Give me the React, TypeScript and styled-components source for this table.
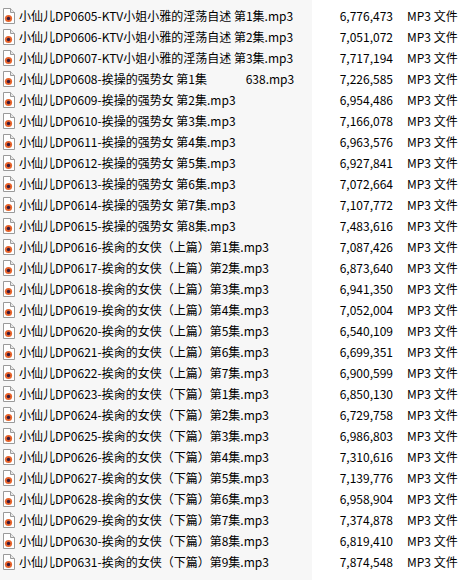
import React from 'react';
import styled, { createGlobalStyle } from 'styled-components';

const GlobalStyle = createGlobalStyle`
  html, body {
    margin: 0;
    padding: 0;
    background: #ffffff;
  }
`;

const List = styled.div`
  width: 471px;
  height: 580px;
  box-sizing: border-box;
  padding-top: 5px;
  overflow: hidden;
  background: linear-gradient(to right, #f7f7f7 312px, #ffffff 312px);
  font-family: "Microsoft YaHei UI", "Noto Sans CJK SC", "Noto Sans", sans-serif;
  font-size: 12px;
  color: #000000;
`;

const Row = styled.div`
  display: grid;
  grid-template-columns: 312px 81px 1fr;
  height: 21px;
  align-items: center;
  white-space: pre;
`;

const NameCell = styled.div`
  display: flex;
  align-items: center;
  gap: 2px;
  padding-left: 1px;
  overflow: hidden;
`;

const SizeCell = styled.div`
  text-align: right;
`;

const TypeCell = styled.div`
  padding-left: 14px;
`;

const Mp3Icon = () => (
  <svg width="16" height="16" viewBox="0 0 16 16">
    <path d="M2.5 0.5 H9.5 L13.5 4.5 V15.5 H2.5 Z" fill="#ffffff" stroke="#9a9a9a" />
    <path d="M9.5 0.5 V4.5 H13.5" fill="#e8e8e8" stroke="#9a9a9a" />
    <circle cx="7.5" cy="10.5" r="3.6" fill="#e8632a" />
    <circle cx="7.5" cy="10.5" r="1.7" fill="#3a1a3a" />
  </svg>
);

type FileItem = { name: string; size: string };

const files: FileItem[] = [
  { name: '小仙儿DP0605-KTV小姐小雅的淫荡自述 第1集.mp3', size: '6,776,473' },
  { name: '小仙儿DP0606-KTV小姐小雅的淫荡自述 第2集.mp3', size: '7,051,072' },
  { name: '小仙儿DP0607-KTV小姐小雅的淫荡自述 第3集.mp3', size: '7,717,194' },
  { name: '小仙儿DP0608-挨操的强势女 第1集　　　 638.mp3', size: '7,226,585' },
  { name: '小仙儿DP0609-挨操的强势女 第2集.mp3', size: '6,954,486' },
  { name: '小仙儿DP0610-挨操的强势女 第3集.mp3', size: '7,166,078' },
  { name: '小仙儿DP0611-挨操的强势女 第4集.mp3', size: '6,963,576' },
  { name: '小仙儿DP0612-挨操的强势女 第5集.mp3', size: '6,927,841' },
  { name: '小仙儿DP0613-挨操的强势女 第6集.mp3', size: '7,072,664' },
  { name: '小仙儿DP0614-挨操的强势女 第7集.mp3', size: '7,107,772' },
  { name: '小仙儿DP0615-挨操的强势女 第8集.mp3', size: '7,483,616' },
  { name: '小仙儿DP0616-挨肏的女侠（上篇）第1集.mp3', size: '7,087,426' },
  { name: '小仙儿DP0617-挨肏的女侠（上篇）第2集.mp3', size: '6,873,640' },
  { name: '小仙儿DP0618-挨肏的女侠（上篇）第3集.mp3', size: '6,941,350' },
  { name: '小仙儿DP0619-挨肏的女侠（上篇）第4集.mp3', size: '7,052,004' },
  { name: '小仙儿DP0620-挨肏的女侠（上篇）第5集.mp3', size: '6,540,109' },
  { name: '小仙儿DP0621-挨肏的女侠（上篇）第6集.mp3', size: '6,699,351' },
  { name: '小仙儿DP0622-挨肏的女侠（上篇）第7集.mp3', size: '6,900,599' },
  { name: '小仙儿DP0623-挨肏的女侠（下篇）第1集.mp3', size: '6,850,130' },
  { name: '小仙儿DP0624-挨肏的女侠（下篇）第2集.mp3', size: '6,729,758' },
  { name: '小仙儿DP0625-挨肏的女侠（下篇）第3集.mp3', size: '6,986,803' },
  { name: '小仙儿DP0626-挨肏的女侠（下篇）第4集.mp3', size: '7,310,616' },
  { name: '小仙儿DP0627-挨肏的女侠（下篇）第5集.mp3', size: '7,139,776' },
  { name: '小仙儿DP0628-挨肏的女侠（下篇）第6集.mp3', size: '6,958,904' },
  { name: '小仙儿DP0629-挨肏的女侠（下篇）第7集.mp3', size: '7,374,878' },
  { name: '小仙儿DP0630-挨肏的女侠（下篇）第8集.mp3', size: '6,819,410' },
  { name: '小仙儿DP0631-挨肏的女侠（下篇）第9集.mp3', size: '7,874,548' },
];

const App: React.FC = () => {
  return (
    <>
      <GlobalStyle />
      <List>
        {files.map((f) => (
          <Row key={f.name}>
            <NameCell>
              <Mp3Icon />
              <span>{f.name}</span>
            </NameCell>
            <SizeCell>{f.size}</SizeCell>
            <TypeCell>MP3 文件</TypeCell>
          </Row>
        ))}
      </List>
    </>
  );
};

export default App;
